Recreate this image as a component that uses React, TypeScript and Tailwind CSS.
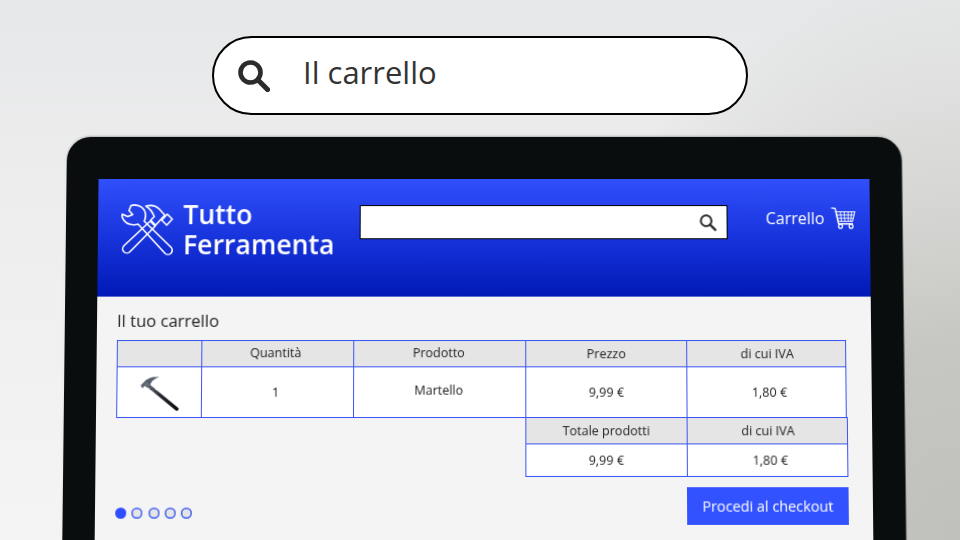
import { ReactNode } from 'react';

function SearchIcon({ size, stroke }: { size: number; stroke: number }) {
  return (
    <svg width={size} height={size} viewBox="0 0 32 32" fill="none" stroke="#2b2b2b" strokeLinecap="round">
      <circle cx="12.5" cy="12.5" r="10" strokeWidth={stroke} />
      <line x1="20" y1="20" x2="29.5" y2="29.5" strokeWidth={stroke + 0.6} />
    </svg>
  );
}

function ToolsLogo() {
  return (
    <svg width="52" height="52" viewBox="0 0 52 52" fill="none" stroke="#ffffff" strokeWidth="1.6" strokeLinejoin="round" className="shrink-0 overflow-visible">
      {/* wrench */}
      <path d="M9.7 1.5 L7.8 6.5 L11.5 10.5 L6.5 12.5 L1 10 C0.5 12 1 14 3 16.5 C6 20.5 12 21.5 17 20 L44 49 A4 4 0 0 0 50 43 L23 17 C25 13 25 10 23 6 C20 1.5 14 0 9.7 1.5 Z" />
      {/* hammer */}
      <path d="M29 17 L34 22 L9 47.5 A4 4 0 0 1 3 41.5 Z" />
      <path d="M24.5 2 C30 0.5 35 2 38 5 L43.5 11 L34.5 21 L29.5 16 L33 12.5 C31 7.5 28 4 24.5 2 Z" />
      <path d="M46 10 L51 15 L45.5 21 L40.5 16 Z" />
    </svg>
  );
}

function CartIcon() {
  return (
    <svg width="25" height="22" viewBox="0 0 26 23" fill="none" stroke="#ffffff" strokeWidth="1.1" className="shrink-0">
      <path d="M0.5 1 L4.5 1.5 L8 17.5 L23 17.5" strokeWidth="1.4" />
      <path d="M5.5 5 L25 5 L22.5 15 L7.5 15 Z" />
      <path d="M6.3 8.3 L24.2 8.3 M7 11.6 L23.4 11.6 M10 5 L11 15 M14 5 L14.6 15 M18 5 L18 15 M21.7 5 L20.5 15" strokeWidth="0.9" />
      <circle cx="10" cy="20" r="2" strokeWidth="1.3" />
      <circle cx="21" cy="20" r="2" strokeWidth="1.3" />
    </svg>
  );
}

function HammerPicture() {
  return (
    <svg width="44" height="38" viewBox="0 0 44 40">
      <defs>
        <linearGradient id="handle" x1="0" y1="0" x2="1" y2="1">
          <stop offset="0" stopColor="#6a7280" />
          <stop offset="0.45" stopColor="#23262c" />
          <stop offset="1" stopColor="#0c0d10" />
        </linearGradient>
      </defs>
      <path d="M2 12.5 L5 9.5 C9 5 14 3 21.5 4 C16 5.5 13 8.5 12 12 L9.5 15 L6 13 L4 15.5 Z" fill="#565e6c" />
      <line x1="8" y1="11" x2="40" y2="37" stroke="url(#handle)" strokeWidth="3.6" strokeLinecap="round" />
    </svg>
  );
}

const th = 'border border-[#3a55f5] bg-[#e5e5e5] font-normal h-[26px] p-0';
const td = 'border border-[#3a55f5] bg-white text-center p-0';

function Dot({ on }: { on?: boolean }) {
  return (
    <span className={on ? 'size-[11px] rounded-full bg-[#2f4fff]' : 'size-[11px] rounded-full bg-[#e5e5e5] shadow-[inset_0_0_0_1.5px_#4560f6]'} />
  );
}

function Head({ children, className = '' }: { children: ReactNode; className?: string }) {
  return <th className={th + ' ' + className}>{children}</th>;
}

export default function App() {
  return (
    <div className="w-[960px] h-[540px] overflow-hidden flex flex-col items-center bg-[radial-gradient(ellipse_460px_560px_at_100%_100%,#c0c1bc_0%,#c6c7c2_35%,rgba(225,226,226,0)_100%),linear-gradient(180deg,#e6e7e8_0%,#eeeeef_40%,#f4f4f4_100%)] [font-family:'Open_Sans',sans-serif] text-[#222]">
      {/* search bar on top of the slide */}
      <div className="mt-[36px] shrink-0 w-[536px] h-[79px] rounded-full border-2 border-black bg-white flex items-center pl-[24px] gap-[33px]">
        <SearchIcon size={32} stroke={4.6} />
        <span className="text-[31px] leading-none -mt-[6px] text-[#333]">Il carrello</span>
      </div>

      {/* tablet */}
      <div className="mt-[22px] ml-[7px] shrink-0 w-[834px] h-[440px] rounded-t-[24px] bg-[#0a0d0d] pt-[42px] px-[32px] origin-top [transform:perspective(1250px)_rotateX(2deg)] shadow-[0_-1px_2px_rgba(120,120,120,0.5),-1px_0_0_#ffffff,1px_0_0_#555a58]">
        <div className="h-full bg-[#f4f4f4]">
          <header className="h-[117px] bg-[linear-gradient(180deg,#3050fb_0%,#1a36df_45%,#0019b6_100%)] flex items-start text-white">
            <div className="ml-[23px] mt-[25px]">
              <ToolsLogo />
            </div>
            <div className="ml-[10px] mt-[20px] w-[176px] text-[26.5px] leading-[30px] font-semibold">
              Tutto
              <br />
              Ferramenta
            </div>
            <div className="mt-[26px] w-[367px] h-[34px] bg-white border-[1.5px] border-black flex items-center justify-end pr-[10px]">
              <SearchIcon size={17} stroke={3.8} />
            </div>
            <div className="ml-[38px] mt-[27px] flex items-center gap-[6px]">
              <span className="text-[16px] leading-[24px]">Carrello</span>
              <CartIcon />
            </div>
          </header>

          <div className="pl-[20px]">
            <h2 className="mt-[13px] h-[21px] text-[16.5px] leading-[21px]">Il tuo carrello</h2>
            <table className="mt-[9px] w-[724px] table-fixed border-collapse text-[12.5px] leading-[18px] text-center">
              <colgroup>
                <col className="w-[84px]" />
                <col className="w-[151px]" />
                <col className="w-[171px]" />
                <col className="w-[160px]" />
                <col className="w-[158px]" />
              </colgroup>
              <thead>
                <tr>
                  <Head>{''}</Head>
                  <Head className="pr-[4px] pb-[2px]">Quantità</Head>
                  <Head className="pb-[2px] pr-[2px]">Prodotto</Head>
                  <Head>Prezzo</Head>
                  <Head className="pl-[2px]">di cui IVA</Head>
                </tr>
              </thead>
              <tbody>
                <tr className="h-[50px]">
                  <td className={td}>
                    <div className="flex justify-center">
                      <HammerPicture />
                    </div>
                  </td>
                  <td className={td + ' pr-[4px]'}>1</td>
                  <td className={td + ' pb-[4px] pr-[2px]'}>Martello</td>
                  <td className={td}>9,99 €</td>
                  <td className={td + ' pl-[6px]'}>1,80 €</td>
                </tr>
              </tbody>
            </table>

            <table className="-mt-px ml-[406px] w-[320px] table-fixed border-collapse text-[12.5px] leading-[18px] text-center">
              <thead>
                <tr>
                  <Head>Totale prodotti</Head>
                  <Head className="pl-[2px]">di cui IVA</Head>
                </tr>
              </thead>
              <tbody>
                <tr className="h-[32px]">
                  <td className={td}>9,99 €</td>
                  <td className={td + ' pl-[6px]'}>1,80 €</td>
                </tr>
              </tbody>
            </table>

            <div className="mt-[10px] w-[726px] flex items-end justify-between">
              <div className="flex gap-[5.3px] mb-[6px]">
                <Dot on />
                <Dot />
                <Dot />
                <Dot />
                <Dot />
              </div>
              <button className="w-[160px] h-[37px] bg-[#3352ff] text-white text-[14.3px]">Procedi al checkout</button>
            </div>
          </div>
        </div>
      </div>
    </div>
  );
}
